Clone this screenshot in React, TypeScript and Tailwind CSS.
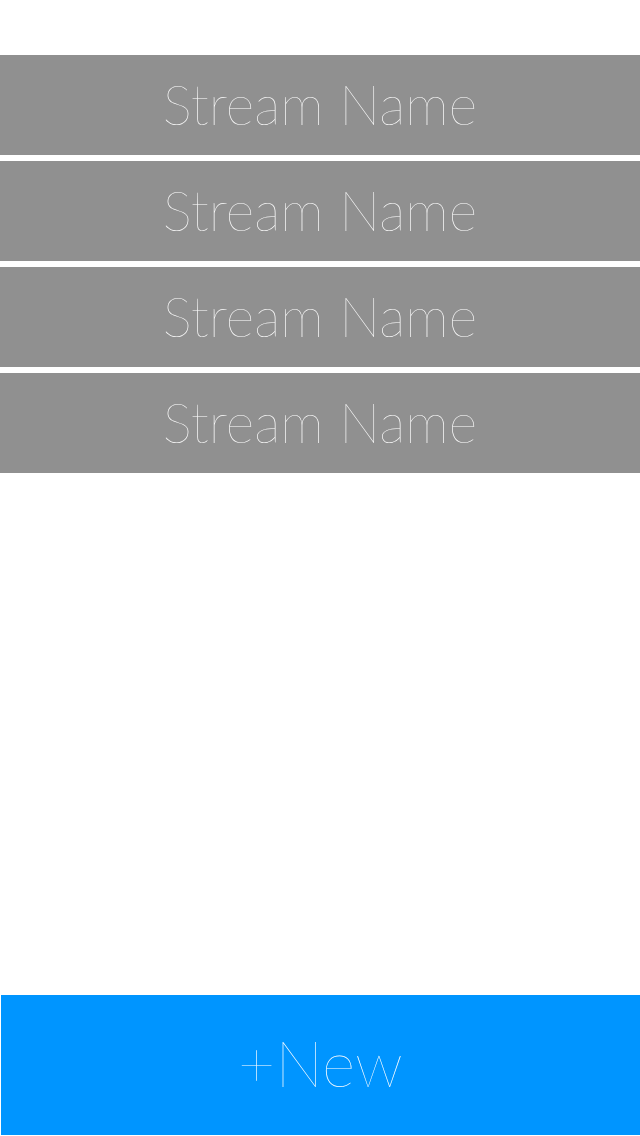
import React from "react";

export default function App() {
  const rows = ["Stream Name", "Stream Name", "Stream Name", "Stream Name"];
  return (
    <div className="w-[640px] h-[1136px] bg-white flex flex-col" style={{ fontFamily: "Lato, 'Liberation Sans', sans-serif" }}>
      <div className="h-[55px] shrink-0" />
      <div className="flex flex-col gap-[6px]">
        {rows.map((r, i) => (
          <div key={i} className="h-[100px] bg-[#909090] flex items-center justify-center text-white text-[55px] font-thin leading-none">
            <span className="pb-[2px]">{r}</span>
          </div>
        ))}
      </div>
      <div className="flex-1" />
      <div className="h-[140px] ml-[1px] mb-[1px] bg-[#0095ff] flex items-center justify-center text-white text-[64px] font-thin leading-none">
        <span className="pb-[4px]">+New</span>
      </div>
    </div>
  );
}
